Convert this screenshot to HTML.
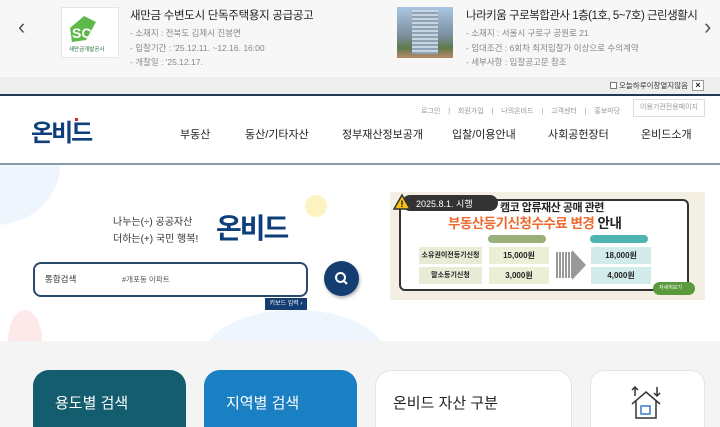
<!DOCTYPE html>
<html><head><meta charset="utf-8"><style>
*{margin:0;padding:0;box-sizing:border-box}
html,body{width:720px;height:427px;overflow:hidden}
body{font-family:"Liberation Sans","Noto Sans CJK KR",sans-serif;background:#fff;position:relative;color:#222}
.a{position:absolute}
.t{white-space:nowrap}
</style></head><body>
<div class="a" style="left:0;top:0;width:720px;height:77px;background:#f7f7f7"></div>
<div class="a" style="left:0;top:77px;width:720px;height:18px;background:#eeeeee"></div>
<div class="a" style="left:0;top:94px;width:720px;height:2px;background:#1f3a55"></div>
<div class="a t" style="left:18px;top:14px;font-size:22px;color:#555;font-weight:300">&#8249;</div>
<div class="a t" style="left:704px;top:14px;font-size:22px;color:#555">&#8250;</div>
<div class="a" style="left:61px;top:7px;width:58px;height:51px;background:#fff;border:1px solid #e6e6e6"></div>
<svg class="a" style="left:64px;top:10px" width="52" height="44"><path d="M6 18 L20 6 L32 12 L22 30 L8 32Z" fill="#5fb94a"/><text x="8" y="28" font-size="14" font-weight="bold" fill="#fff" font-family="Liberation Sans">SC</text><text x="5" y="41" font-size="5.5" fill="#1d6b3a" font-family="Noto Sans CJK KR">새만금개발공사</text></svg>
<div class="a t" style="left:130px;top:7px;font-size:11.5px;color:#222;letter-spacing:-0.3px">새만금 수변도시 단독주택용지 공급공고</div>
<div class="a t" style="left:130px;top:26px;font-size:8.5px;color:#888;line-height:14.5px">- 소재지 : 전북도 김제시 진봉면<br>- 입찰기간 : '25.12.11. ~12.16. 16:00<br>- 개찰일 : '25.12.17.</div>
<div class="a" style="left:397px;top:7px;width:56px;height:51px;background:linear-gradient(180deg,#a9c7e2 0%,#7d8fa0 55%,#5e7a4e 80%,#b98a6a 100%)"></div>
<div class="a" style="left:412px;top:10px;width:26px;height:44px;background:repeating-linear-gradient(0deg,#8fa3b6 0 2px,#c9d6e2 2px 4px)"></div>
<div class="a t" style="left:466px;top:7px;width:232px;overflow:hidden;font-size:11.5px;color:#222;letter-spacing:-0.5px">나라키움 구로복합관사 1층(1호, 5~7호) 근린생활시설 임대</div>
<div class="a t" style="left:466px;top:26px;font-size:8.5px;color:#888;line-height:14.5px">- 소재지 : 서울시 구로구 공원로 21<br>- 임대조건 : 6회차 최저입찰가 이상으로 수의계약<br>- 세부사항 : 입찰공고문 참조</div>
<div class="a" style="left:610px;top:82px;width:7px;height:7px;border:1px solid #777;background:#fff"></div>
<div class="a t" style="left:619px;top:80px;font-size:7.5px;color:#333">오늘하루이창열지않음</div>
<div class="a" style="left:692px;top:80px;width:12px;height:11px;border:1px solid #999;background:#fff;font-size:9px;line-height:9px;text-align:center;font-weight:bold">×</div>
<div class="a t" style="left:421px;top:106px;font-size:7px;color:#999;word-spacing:2px">로그인 &nbsp;|&nbsp; 회원가입 &nbsp;|&nbsp; 나의온비드 &nbsp;|&nbsp; 고객센터 &nbsp;|&nbsp; 홍보마당</div>
<div class="a t" style="left:633px;top:99px;width:72px;height:18px;border:1px solid #ddd;font-size:7px;color:#999;text-align:center;line-height:16px">이용기관전용페이지</div>
<div class="a t" style="left:31px;top:113px;font-size:24px;font-weight:bold;color:#0f3f7a;letter-spacing:-2px">온비드</div>
<div class="a" style="left:75px;top:118px;width:3px;height:3px;background:#e0202b"></div>
<div class="a t" style="left:180px;top:126px;font-size:11px;color:#222">부동산</div>
<div class="a t" style="left:245px;top:126px;font-size:11px;color:#222">동산/기타자산</div>
<div class="a t" style="left:342px;top:126px;font-size:11px;color:#222">정부재산정보공개</div>
<div class="a t" style="left:452px;top:126px;font-size:11px;color:#222">입찰/이용안내</div>
<div class="a t" style="left:548px;top:126px;font-size:11px;color:#222">사회공헌장터</div>
<div class="a t" style="left:641px;top:126px;font-size:11px;color:#222">온비드소개</div>
<div class="a" style="left:0;top:163px;width:720px;height:2px;background:#8a99a6"></div>
<div class="a" style="left:0;top:165px;width:720px;height:176px;overflow:hidden">
<div class="a" style="left:-70px;top:-60px;width:130px;height:120px;border-radius:50%;background:#eef5fc"></div>
<div class="a" style="left:8px;top:145px;width:34px;height:60px;border-radius:50%;background:#fde9ea"></div>
<div class="a" style="left:205px;top:145px;width:180px;height:90px;border-radius:50%;background:#eef5fc"></div>
</div>
<div class="a" style="left:305px;top:195px;width:22px;height:22px;border-radius:50%;background:#fdf3c0"></div>
<div class="a t" style="left:113px;top:214px;font-size:10px;color:#333;line-height:17px">나누는(÷) 공공자산<br>더하는(+) 국민 행복!</div>
<div class="a t" style="left:216px;top:207px;font-size:28px;font-weight:bold;color:#0f3f7a;letter-spacing:-2px">온비드</div>
<div class="a" style="left:33px;top:262px;width:275px;height:35px;border:2px solid #2a4a6d;border-radius:8px;background:#fff"></div>
<div class="a t" style="left:45px;top:273px;font-size:8.5px;color:#333">통합검색</div>
<div class="a t" style="left:122px;top:274px;font-size:7.5px;color:#555">#개포동 아파트</div>
<div class="a" style="left:324px;top:261px;width:35px;height:35px;border-radius:50%;background:#143e72;box-shadow:1px 2px 3px rgba(0,0,0,.3)"></div>
<svg class="a" style="left:334px;top:271px" width="15" height="15"><circle cx="6.5" cy="6.5" r="4.5" stroke="#fff" stroke-width="2" fill="none"/><path d="M10 10 L13 13" stroke="#fff" stroke-width="2"/></svg>
<div class="a t" style="left:265px;top:298px;width:42px;height:12px;background:#143e72;color:#fff;font-size:6px;line-height:12px;text-align:center">키보드 입력 ›</div>
<div class="a" style="left:390px;top:192px;width:315px;height:108px;background:#f3efe2"></div>
<div class="a" style="left:399px;top:199px;width:290px;height:92px;border:2px solid #333;border-radius:6px;background:#fff"></div>
<div class="a" style="left:402px;top:195px;width:96px;height:16px;border-radius:8px;background:#333"></div>
<div class="a t" style="left:416px;top:197px;font-size:9px;color:#fff">2025.8.1. 시행</div>
<svg class="a" style="left:393px;top:194px" width="18" height="16"><path d="M9 1 L17 15 L1 15Z" fill="#f7c31b" stroke="#333" stroke-width="1.5"/><text x="7.5" y="13" font-size="9" font-weight="bold">!</text></svg>
<div class="a t" style="left:500px;top:199px;font-size:11px;font-weight:bold;color:#222;letter-spacing:-0.5px">캠코 압류재산 공매 관련</div>
<div class="a t" style="left:448px;top:212px;font-size:13.5px;font-weight:bold;color:#ef6a2e;letter-spacing:-0.5px">부동산등기신청수수료 변경 <span style="color:#222">안내</span></div>
<div class="a" style="left:488px;top:235px;width:58px;height:8px;border-radius:4px;background:#9ab07a"></div>
<div class="a" style="left:590px;top:235px;width:58px;height:8px;border-radius:4px;background:#4fb4b1"></div>
<div class="a t" style="left:419px;top:247px;width:63px;height:17px;background:#e6ecd6;font-size:7px;text-align:center;line-height:17px;font-weight:bold">소유권이전등기신청</div>
<div class="a t" style="left:419px;top:267px;width:63px;height:17px;background:#e6ecd6;font-size:7px;text-align:center;line-height:17px;font-weight:bold">말소등기신청</div>
<div class="a t" style="left:489px;top:247px;width:60px;height:17px;background:#eaf0d6;font-size:8px;text-align:center;line-height:17px;font-weight:bold">15,000원</div>
<div class="a t" style="left:489px;top:267px;width:60px;height:17px;background:#eaf0d6;font-size:8px;text-align:center;line-height:17px;font-weight:bold">3,000원</div>
<div class="a" style="left:556px;top:252px;width:16px;height:26px;background:repeating-linear-gradient(90deg,#999 0 2px,#fff 2px 3px)"></div>
<svg class="a" style="left:572px;top:250px" width="14" height="30"><path d="M0 0 L14 15 L0 30Z" fill="#999"/></svg>
<div class="a t" style="left:591px;top:247px;width:60px;height:17px;background:#d2ecec;font-size:8px;text-align:center;line-height:17px;font-weight:bold">18,000원</div>
<div class="a t" style="left:591px;top:267px;width:60px;height:17px;background:#d2ecec;font-size:8px;text-align:center;line-height:17px;font-weight:bold">4,000원</div>
<div class="a t" style="left:653px;top:282px;width:42px;height:13px;border-radius:7px;background:#5a9a3c;color:#fff;font-size:5px;line-height:13px;padding-left:6px">자세히보기</div>
<div class="a" style="left:0;top:341px;width:720px;height:86px;background:#f4f4f4"></div>
<div class="a" style="left:33px;top:370px;width:153px;height:57px;border-radius:16px 16px 0 0;background:#145d6f"></div>
<div class="a t" style="left:55px;top:392px;font-size:15px;color:#fff">용도별 검색</div>
<div class="a" style="left:204px;top:370px;width:153px;height:57px;border-radius:16px 16px 0 0;background:#1a80c3"></div>
<div class="a t" style="left:226px;top:392px;font-size:15px;color:#fff">지역별 검색</div>
<div class="a" style="left:375px;top:370px;width:197px;height:57px;border-radius:16px 16px 0 0;background:#fff;border:1px solid #e4e4e4;border-bottom:none"></div>
<div class="a t" style="left:393px;top:392px;font-size:15px;color:#222">온비드 자산 구분</div>
<div class="a" style="left:590px;top:370px;width:115px;height:57px;border-radius:14px 14px 0 0;background:#fff;border:1px solid #e4e4e4;border-bottom:none"></div>
<svg class="a" style="left:628px;top:384px" width="36" height="36" fill="none" stroke="#333" stroke-width="1.5"><path d="M4 20 L18 8 L32 20 M8 17 V34 H28 V17"/><rect x="13" y="22" width="9" height="8" stroke="#3a7bc8"/><path d="M7 12 V3 M4 6 L7 3 L10 6 M29 3 V12 M26 9 L29 12 L32 9"/></svg>
</body></html>
